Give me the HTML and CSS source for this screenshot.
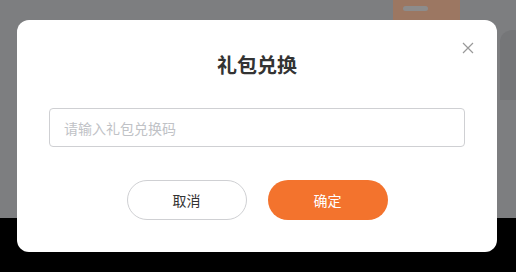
FILE: index.html
```html
<!DOCTYPE html>
<html lang="zh-CN">
<head>
<meta charset="utf-8">
<title>礼包兑换</title>
<link rel="stylesheet" href="styles.css">
</head>
<body>
<div class="page">
  <div class="page-top">
    <div class="tab"><span class="tab-bar"></span></div>
    <div class="side-shape"></div>
  </div>
  <div class="page-bottom"></div>
</div>
<div class="modal">
  <button class="close" aria-label="关闭">
    <svg width="12" height="12" viewBox="0 0 12 12"><path d="M1 1L11 11M11 1L1 11" stroke="#999" stroke-width="1.2" fill="none"/></svg>
  </button>
  <h2 class="title">礼包兑换</h2>
  <input class="code-input" type="text" placeholder="请输入礼包兑换码">
  <div class="actions">
    <button class="btn btn-cancel">取消</button>
    <button class="btn btn-ok">确定</button>
  </div>
</div>
</body>
</html>
```
FILE: styles.css
```css
* { box-sizing: border-box; }
html, body { margin: 0; padding: 0; }
body {
  width: 516px;
  height: 272px;
  overflow: hidden;
  font-family: "Noto Sans CJK SC", "Noto Sans", sans-serif;
  background: #000;
}
.page { display: flex; flex-direction: column; height: 272px; }
.page-top {
  height: 218px;
  background: #7d7e80;
  display: flex;
  justify-content: flex-end;
  align-items: flex-start;
  padding-right: 56px;
  position: relative;
}
.tab {
  width: 67px;
  height: 24px;
  background: #9c7762;
  padding: 6px 0 0 10px;
}
.tab-bar {
  display: block;
  width: 25px;
  height: 5px;
  border-radius: 3px;
  background: #8d8c8c;
}
.side-shape {
  position: absolute;
  right: -10px;
  top: 30px;
  width: 26px;
  height: 70px;
  border-radius: 12px 12px 0 0;
  background: #757678;
}
.page-bottom { flex: 1; background: #000; }

.modal {
  position: fixed;
  left: 17px;
  top: 20px;
  width: 480px;
  height: 232px;
  background: #fff;
  border-radius: 12px;
  padding: 0 32px;
  display: flex;
  flex-direction: column;
  align-items: stretch;
}
.close {
  position: absolute;
  left: 445px;
  top: 22px;
  width: 12px;
  height: 12px;
  padding: 0;
  border: 0;
  background: none;
  display: flex;
}
.title {
  margin: 31px 0 0;
  height: 28px;
  line-height: 28px;
  font-size: 20px;
  font-weight: 700;
  color: #333;
  text-align: center;
}
.code-input {
  margin-top: 29px;
  height: 39px;
  border: 1px solid #cfd0d3;
  border-radius: 4px;
  padding: 0 14px;
  font-family: inherit;
  font-size: 14px;
  color: #333;
  outline: none;
}
.code-input::placeholder { color: #c0c2c6; }
.actions {
  margin-top: 33px;
  display: flex;
  justify-content: center;
  gap: 21px;
}
.btn {
  width: 120px;
  height: 40px;
  border-radius: 20px;
  font-family: inherit;
  font-size: 14px;
  padding: 0;
  cursor: pointer;
}
.btn-cancel {
  background: #fff;
  border: 1px solid #cfd0d3;
  color: #333;
}
.btn-ok {
  background: #f3732d;
  border: 0;
  color: #fff;
}
```
